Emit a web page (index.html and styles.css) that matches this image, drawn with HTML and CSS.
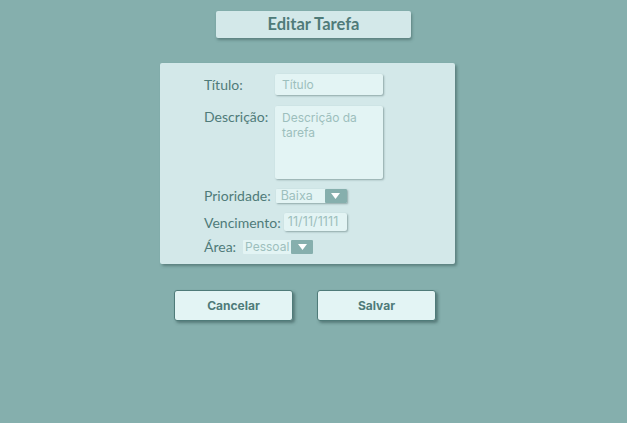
FILE: index.html
```html
<!DOCTYPE html>
<html lang="pt">
<head>
<meta charset="utf-8">
<link rel="stylesheet" href="styles.css">
</head>
<body>
<div class="page">
  <h1 class="header">Editar Tarefa</h1>
  <form class="panel">
    <div class="row">
      <label class="label fixed">Título:</label>
      <div class="input text-input"><span class="ph">Título</span></div>
    </div>
    <div class="row top">
      <label class="label fixed">Descrição:</label>
      <div class="input textarea"><span class="ph">Descrição da tarefa</span></div>
    </div>
    <div class="row prio">
      <label class="label">Prioridade:</label>
      <div class="select prio-select"><span class="ph">Baixa</span><span class="arrow"><svg width="9" height="6" viewBox="0 0 9 6"><path d="M0 0H9L4.5 6Z" fill="#fff"/></svg></span></div>
    </div>
    <div class="row venc">
      <label class="label">Vencimento:</label>
      <div class="input date-input"><span class="ph">11/11/1111</span></div>
    </div>
    <div class="row area">
      <label class="label">Área:</label>
      <div class="select area-select"><span class="ph">Pessoal</span><span class="arrow"><svg width="9" height="6" viewBox="0 0 9 6"><path d="M0 0H9L4.5 6Z" fill="#fff"/></svg></span></div>
    </div>
  </form>
  <div class="actions">
    <button class="btn" type="button">Cancelar</button>
    <button class="btn" type="button">Salvar</button>
  </div>
</div>
</body>
</html>
```
FILE: styles.css
```css
* { box-sizing: border-box; }
html, body { margin: 0; padding: 0; }
body {
  background: #85afad;
  width: 627px;
  height: 423px;
  overflow: hidden;
  font-family: Lato, "Noto Sans", sans-serif;
  color: #4f7b79;
}
.page {
  display: flex;
  flex-direction: column;
  padding-top: 11px;
}
.header {
  margin: 0 0 0 216px;
  width: 195px;
  height: 27px;
  background: #d3e8e9;
  border-radius: 2px;
  box-shadow: 1px 2px 3px rgba(40, 70, 70, 0.45);
  font-size: 16.5px;
  font-weight: 700;
  text-align: center;
  line-height: 27px;
  color: #4f7b79;
}
.panel {
  margin: 25px 0 0 160px;
  width: 295px;
  height: 201px;
  background: #d3e8e9;
  border-radius: 2px;
  box-shadow: 2px 2px 3px rgba(40, 70, 70, 0.45);
  padding: 11px 0 0 44px;
  display: flex;
  flex-direction: column;
}
.row {
  display: flex;
  align-items: center;
  gap: 5px;
}
.row.top { align-items: flex-start; margin-top: 11px; }
.row.prio { margin-top: 8px; }
.row.venc { margin-top: 9px; gap: 3px; }
.row.area { margin-top: 7px; gap: 7px; }
.label {
  font-size: 14px;
  line-height: 17px;
  color: #4f7b79;
}
.label.fixed { width: 66px; }
.row.top .label { margin-top: 2px; }
.input, .select {
  background: #e3f4f4;
  border-radius: 2px;
  box-shadow: 1px 1px 2px rgba(40, 70, 70, 0.4);
  font-family: Inter, Roboto, sans-serif;
  font-size: 12px;
}
.ph { color: #9dbfbd; }
.text-input {
  width: 108px;
  height: 21px;
  padding: 0 0 0 7px;
  line-height: 21px;
}
.textarea {
  width: 108px;
  height: 73px;
  padding: 4px 6px 0 7px;
  line-height: 15px;
}
.date-input {
  width: 63px;
  height: 18px;
  padding: 0 0 0 4px;
  line-height: 18px;
  font-size: 12.5px;
  letter-spacing: 0.1px;
}
.select {
  display: flex;
  align-items: center;
  height: 14px;
  line-height: 14px;
  border-radius: 1px;
  font-size: 12.5px;
}
.select .ph { flex: 1; padding-left: 5px; white-space: nowrap; overflow: hidden; }
.prio-select { width: 71px; }
.area-select { width: 70px; box-shadow: none; font-size: 12px; }
.area-select .ph { padding-left: 2px; }
.arrow {
  flex: 0 0 22px;
  width: 22px;
  height: 14px;
  background: #86afad;
  border-radius: 1px;
  display: flex;
  align-items: center;
  justify-content: center;
}
.arrow svg { display: block; }
.actions {
  display: flex;
  gap: 24px;
  margin: 26px 0 0 174px;
}
.btn {
  width: 119px;
  height: 31px;
  background: #e3f4f4;
  border: 1px solid #4f7b79;
  border-radius: 3px;
  box-shadow: 2px 2px 3px rgba(40, 70, 70, 0.5);
  font-family: Inter, Roboto, sans-serif;
  font-weight: 700;
  font-size: 12px;
  color: #4f7b79;
  padding: 0;
}
```
